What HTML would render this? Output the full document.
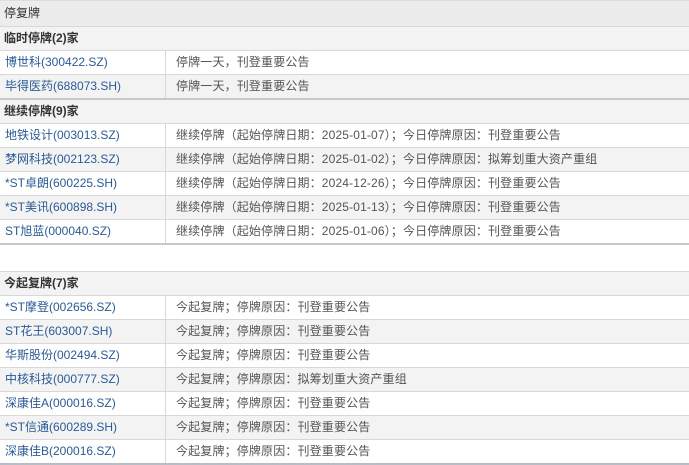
<!DOCTYPE html><html><head><meta charset="utf-8"><style>
body{margin:0;width:689px;height:465px;overflow:hidden;background:#fff;font-family:"Liberation Sans","Noto Sans CJK SC",sans-serif;font-size:12px}
.r{height:23px;line-height:23px;border-bottom:1px solid #d8d8d8;display:flex;white-space:nowrap}
.h{background:#f3f3f3;font-weight:bold;color:#333;padding-left:4px}
.t{background:#ececec;height:25px;line-height:25px;border-top:1px solid #ddd;color:#333}
.a{width:160px;padding-left:5px;border-right:1px solid #d8d8d8;color:#2b5a94}
.b{padding-left:10px;color:#555;letter-spacing:0.15px}
.g{background:#f3f3f3}
.k{border-bottom:2px solid #c8c8c8;height:23px}
</style></head><body>
<div class="r h t" style="font-weight:normal">停复牌</div>
<div class="r h">临时停牌(2)家</div>
<div class="r"><div class="a">博世科(300422.SZ)</div><div class="b">停牌一天，刊登重要公告</div></div>
<div class="r g k"><div class="a">毕得医药(688073.SH)</div><div class="b">停牌一天，刊登重要公告</div></div>
<div class="r h">继续停牌(9)家</div>
<div class="r"><div class="a">地铁设计(003013.SZ)</div><div class="b">继续停牌（起始停牌日期：2025-01-07）；今日停牌原因：刊登重要公告</div></div>
<div class="r g"><div class="a">梦网科技(002123.SZ)</div><div class="b">继续停牌（起始停牌日期：2025-01-02）；今日停牌原因：拟筹划重大资产重组</div></div>
<div class="r"><div class="a">*ST卓朗(600225.SH)</div><div class="b">继续停牌（起始停牌日期：2024-12-26）；今日停牌原因：刊登重要公告</div></div>
<div class="r g"><div class="a">*ST美讯(600898.SH)</div><div class="b">继续停牌（起始停牌日期：2025-01-13）；今日停牌原因：刊登重要公告</div></div>
<div class="r k"><div class="a">ST旭蓝(000040.SZ)</div><div class="b">继续停牌（起始停牌日期：2025-01-06）；今日停牌原因：刊登重要公告</div></div>
<div style="height:26px;border-bottom:1px solid #d8d8d8"></div>
<div class="r h">今起复牌(7)家</div>
<div class="r"><div class="a">*ST摩登(002656.SZ)</div><div class="b">今起复牌；停牌原因：刊登重要公告</div></div>
<div class="r g"><div class="a">ST花王(603007.SH)</div><div class="b">今起复牌；停牌原因：刊登重要公告</div></div>
<div class="r"><div class="a">华斯股份(002494.SZ)</div><div class="b">今起复牌；停牌原因：刊登重要公告</div></div>
<div class="r g"><div class="a">中核科技(000777.SZ)</div><div class="b">今起复牌；停牌原因：拟筹划重大资产重组</div></div>
<div class="r"><div class="a">深康佳A(000016.SZ)</div><div class="b">今起复牌；停牌原因：刊登重要公告</div></div>
<div class="r g"><div class="a">*ST信通(600289.SH)</div><div class="b">今起复牌；停牌原因：刊登重要公告</div></div>
<div class="r k" style="border-bottom-color:#b8bcc4"><div class="a">深康佳B(200016.SZ)</div><div class="b">今起复牌；停牌原因：刊登重要公告</div></div>
</body></html>
